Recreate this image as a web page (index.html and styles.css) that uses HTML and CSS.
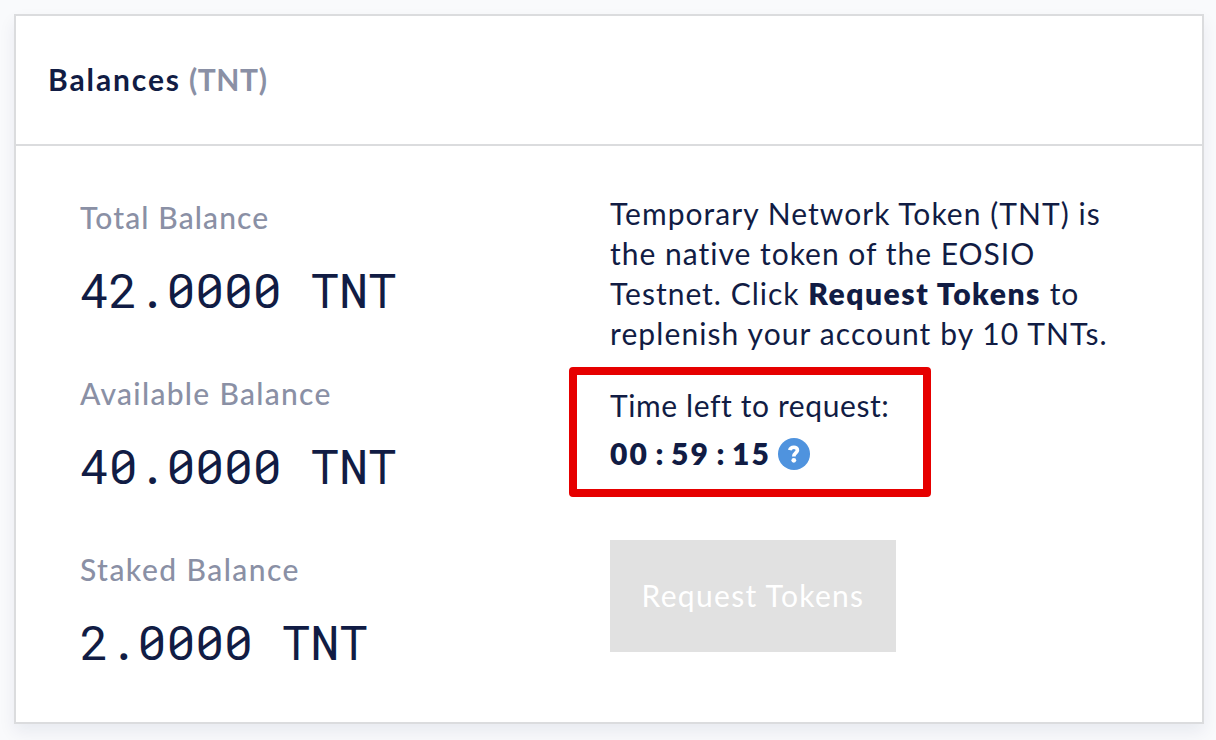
FILE: index.html
```html
<!DOCTYPE html>
<html lang="en">
<head>
<meta charset="utf-8">
<title>Balances</title>
<link rel="stylesheet" href="styles.css">
</head>
<body>
<section class="card">
  <header class="card-header"><h1 class="title">Balances</h1><span class="unit">(TNT)</span></header>
  <div class="card-body">
    <div class="balances">
      <div class="balance"><div class="label label-total">Total Balance</div><div class="amount">42.0000 TNT</div></div>
      <div class="balance"><div class="label label-available">Available Balance</div><div class="amount">40.0000 TNT</div></div>
      <div class="balance"><div class="label label-staked">Staked Balance</div><div class="amount">2.0000 TNT</div></div>
    </div>
    <div class="request">
      <p class="info">
        <span class="line line-1">Temporary Network Token (TNT) is</span>
        <span class="line line-2">the native token of the EOSIO</span>
        <span class="line line-3">Testnet. Click <b class="strong">Request Tokens</b> to</span>
        <span class="line line-4">replenish your account by 10 TNTs.</span>
      </p>
      <div class="timer">
        <div class="timer-label">Time left to request:</div>
        <div class="timer-row">
          <span class="clock"><span class="num">00</span><span class="colon">:</span><span class="num">59</span><span class="colon">:</span><span class="num">15</span></span>
          <svg class="help" viewBox="0 0 32 32"><circle cx="16" cy="16" r="16" fill="#4f93de"/><path d="M11.8 12.2C12.6 8.4 19.4 8.2 19.4 12.2C19.4 14.9 15.8 14.8 15.8 18.4" fill="none" stroke="#fff" stroke-width="3.7"/><circle cx="15.8" cy="22.3" r="2.4" fill="#fff"/></svg>
        </div>
      </div>
      <button class="button" disabled>Request Tokens</button>
    </div>
  </div>
</section>
</body>
</html>
```
FILE: styles.css
```css
* { box-sizing: border-box; }
body {
  margin: 0;
  height: 740px;
  padding: 14px 12px 16px 14px;
  overflow: hidden;
  background: #f9fafc;
  color: #111c44;
  font: 30px/40px Lato, "Open Sans", sans-serif;
  font-variant-ligatures: none;
}
.card {
  height: 710px;
  background: #fff;
  border: 2px solid #dbdcde;
  box-shadow: 0 8px 16px rgba(20, 35, 80, 0.07);
}
.card-header {
  height: 130px;
  padding: 43px 32px 0;
  display: flex;
  gap: 8px;
  border-bottom: 2px solid #dbdcde;
}
.title { margin: 0; font-size: 30px; line-height: 40px; font-weight: 700; letter-spacing: 1.9px; }
.unit { color: #8a90a5; font-weight: 700; letter-spacing: 0.6px; }
.card-body { display: grid; grid-template-columns: 530px 1fr; padding: 47px 64px 0; }
.balances { padding-top: 4px; }
.balance { height: 176px; }
.label { color: #8a90a5; white-space: nowrap; font-weight: 500; }
.label-total { letter-spacing: 1.13px; }
.label-available { letter-spacing: 1.3px; }
.label-staked { letter-spacing: 1.45px; }
.amount { font: 48px/64px "Roboto Mono", "DejaVu Sans Mono", monospace; margin-top: 21px; white-space: pre; }
.info { margin: 0; }
.line { display: block; white-space: nowrap; }
.line-1 { letter-spacing: 1.04px; }
.line-2 { letter-spacing: 1px; }
.line-3 { letter-spacing: 1px; }
.line-4 { letter-spacing: 1.1px; }
.strong { font-weight: 800; letter-spacing: 1.55px; }
.timer {
  width: 362px;
  height: 130px;
  margin: 14px 0 0 -41px;
  padding: 10px 0 0 33px;
  border: 8px solid #e60000;
  border-radius: 4px;
}
.timer-label { white-space: nowrap; letter-spacing: 0.6px; }
.timer-row { display: flex; align-items: center; gap: 8px; height: 40px; margin-top: 8px; }
.clock { display: flex; font-weight: 800; }
.num { width: 38px; letter-spacing: 2px; }
.colon { width: 23px; text-align: center; }
.help { width: 32px; height: 32px; margin-top: 2px; }
.button {
  display: block;
  width: 286px;
  height: 112px;
  margin-top: 43px;
  padding: 0 0 2px;
  border: 0;
  background: #e1e1e1;
  color: #fff;
  font: inherit;
  letter-spacing: 1.3px;
}
```
